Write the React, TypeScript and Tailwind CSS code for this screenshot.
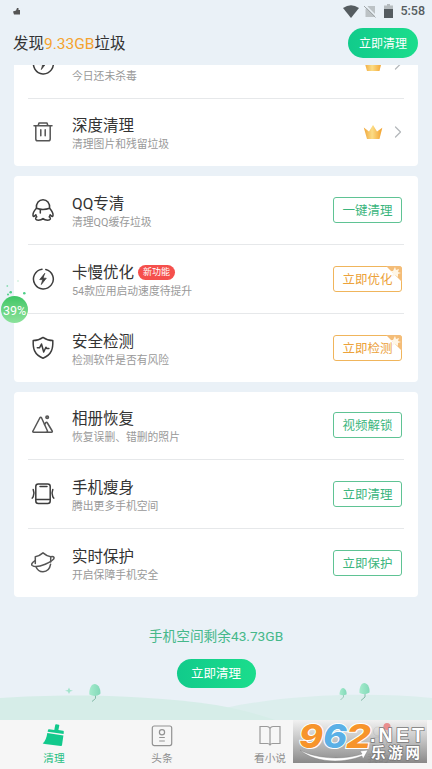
import React from 'react';
import { ChevronRight } from 'lucide-react';

type RowProps = {
  icon: React.ReactNode;
  title?: string;
  desc: string;
  badge?: string;
  action: React.ReactNode;
  className?: string;
};

const Crown = () => (
  <svg className="w-5 h-4" viewBox="0 0 20 16">
    <defs>
      <linearGradient id="crown" x1="0" x2="1" y1="0" y2="0">
        <stop offset="0" stopColor="#f0a63a" />
        <stop offset="0.45" stopColor="#fbdc85" />
        <stop offset="1" stopColor="#f2a02c" />
      </linearGradient>
    </defs>
    <path d="M.8 3.5 6 7.5 10 1l4 6.5 5.300-3.800L16.500 15H4z" fill="url(#crown)" />
  </svg>
);

const VipAction = () => (
  <div className="flex items-center gap-[5px] -mr-[6px]">
    <Crown />
    <ChevronRight className="w-5 h-5 text-[#b4b8bb]" strokeWidth={1.5} />
  </div>
);

const GreenButton = ({ label }: { label: string }) => (
  <button className="w-[69px] h-[26px] rounded-[3px] border border-[#5fc394] text-[#3bb57d] text-[12.5px] leading-[25px]">
    {label}
  </button>
);

const OrangeButton = ({ label }: { label: string }) => (
  <button className="relative w-[69px] h-[26px] rounded-[3px] border border-[#f0b55c] text-[#eca23a] text-[12.5px] leading-[25px]">
    <svg className="absolute -top-px -right-px w-4 h-4" viewBox="0 0 16 16">
      <path d="M0 0h13q3 0 3 3v13z" fill="#f4bd78" />
      <path d="m9 1 1 3 3-1-1 3 3 1-3 1 0 3-3-2-3 2 1-4-3-2 3 0z" fill="#fff6e6" />
    </svg>
    <span className="relative">{label}</span>
  </button>
);

const LineIcon = ({ children }: { children: React.ReactNode }) => (
  <svg
    className="w-6 h-6 shrink-0"
    viewBox="0 0 24 24"
    fill="none"
    stroke="#3d3d3d"
    strokeWidth="1.5"
    strokeLinecap="round"
    strokeLinejoin="round"
  >
    {children}
  </svg>
);

const BoltIcon = () => (
  <LineIcon>
    <path d="M14.800 2.400a9.900 9.900 0 1 1-3.800-.2" />
    <path d="M13.600 6.500 8.700 12.600h3l-1.400 5 5-6.400h-3z" fill="#3d3d3d" strokeWidth=".7" />
  </LineIcon>
);

const TrashIcon = () => (
  <LineIcon>
    <path d="M3 5.700h18M7.200 5.500 8 3h8l.8 2.500M4.800 6v13q0 1.800 1.800 1.800h10.800q1.800 0 1.800-1.800V6M9.800 9.700v6M14.200 9.700v6" stroke="#555" />
  </LineIcon>
);

const PenguinIcon = () => (
  <LineIcon>
    <path d="M5.400 10.300C5 5 8 1.700 12 1.700s7 3.300 6.600 8.600c2 2.200 3.700 5 3.400 7.300-.2 1.500-1.800.7-2.900-.8-.2.900-.5 1.500-.9 2.100 2.200 1.300 1.400 3.300-1.500 3.300-2 0-3.500-.4-4.700-1.600-1.200 1.200-2.700 1.600-4.700 1.600-2.900 0-3.700-2-1.500-3.300-.4-.6-.7-1.200-.9-2.100-1.100 1.500-2.700 2.300-2.900.8-.3-2.300 1.400-5.100 3.500-7.300z" />
    <path d="M5.400 10.300c4 1.400 9.200 1.400 13.200 0M9.300 11.500v3.500" />
  </LineIcon>
);

const ShieldIcon = () => (
  <LineIcon>
    <path d="M12 1.400C8.800 3.700 5.500 4.600 2.200 4.600c-.3 7.600.8 14 9.800 17.600 9-3.600 10.100-10 9.800-17.600-3.300 0-6.600-.9-9.800-3.200z" />
    <path d="M6.300 11.800h2.200l2-3.800 2.200 8 2.200-4.800 1 1.200h2" />
  </LineIcon>
);

const MountainIcon = () => (
  <LineIcon>
    <g stroke="#555">
      <path d="M15.800 19.300H2.800q-1.600 0-.8-1.300L8.800 5q.9-1.500 1.800 0l6 13.200" />
      <path d="m13.500 11.500 1.200-1.700q.9-1 1.700.2L21.200 18q.6 1.300-.8 1.300h-5" />
      <circle cx="16.200" cy="4.200" r="1.300" fill="#999" />
    </g>
  </LineIcon>
);

const PhoneIcon = () => (
  <LineIcon>
    <rect x="4.800" y="2" width="14.400" height="19.600" rx="2.500" />
    <path d="M9 4.600h7M5 17.500h14M2.200 7.500q1.600 3.800 0 7.200l-1 1.400M21.800 7.500q-1.600 3.800 0 7.200l1 1.400" />
  </LineIcon>
);

const PlanetIcon = () => (
  <LineIcon>
    <g stroke="#555">
      <path d="M4.300 12.500V5.800Q8.500 5 12 1.900q3.500 3.100 7.700 3.900V11M5 15.700c1.300 3.500 4 5 7 5 3.900 0 6.800-2.600 7.600-7.500" />
      <path d="M4.200 9.700C1 11.500 0 13.500 1.200 14.500c2.200 1.600 8 .8 13-1.300 5.500-2.300 9.800-5.200 8.700-6.900-.5-.7-1.700-.8-3-.5" />
    </g>
  </LineIcon>
);

const Row = ({ icon, title, desc, badge, action, className = 'h-[69px] pt-[17px]' }: RowProps) => (
  <div className={`flex items-start border-b border-[#e6e8ea] last:border-0 ${className}`}>
    <div className="mt-[5px] ml-[3px] mr-[17px] flex">{icon}</div>
    <div className="flex-1">
      <div className="flex items-center h-[22px] text-[15.5px] leading-5 text-[#333]">
        {title}
        {badge && (
          <span className="ml-1 -mt-px px-[5px] h-[15px] rounded-full bg-[#f5504c] text-white text-[9px] leading-[15px]">{badge}</span>
        )}
      </div>
      <div className="h-[14px] mt-px text-[10.8px] leading-[14px] text-[#999]">{desc}</div>
    </div>
    <div className="flex items-center h-[26px] mt-1 mr-[2px]">{action}</div>
  </div>
);

const Card = ({ children, className = '' }: { children: React.ReactNode; className?: string }) => (
  <section className={`mx-[14px] px-[14px] rounded-[4px] bg-white shrink-0 ${className}`}>{children}</section>
);

const StatusBar = () => (
  <div className="flex items-center justify-between h-[22px] pl-[13px] pr-[7px] text-[#555c60]">
    <svg className="w-[8px] h-[7px]" viewBox="0 0 8 7">
      <path d="M4 0h1.500v2H7v4.500H1L0 3.500 3 2.500z" fill="#555" />
    </svg>
    <div className="flex items-center">
      <svg className="w-4 h-[13px]" viewBox="0 0 16 13">
        <path d="M0 3Q8-2.500 16 3L8 13z" fill="currentColor" />
      </svg>
      <svg className="w-3 h-[13px] ml-[5px]" viewBox="0 0 12 13">
        <path d="M4 1h7v11H1.500V4z" fill="#bcc2c5" />
        <path d="m1 0 12 12" stroke="#eaf1f7" strokeWidth="1.500" />
        <path d="m0 1 11.500 11.500" stroke="#9fa5a8" strokeWidth="1" />
      </svg>
      <svg className="w-[9px] h-[14px] ml-[8px]" viewBox="0 0 9 14">
        <path d="M3 0h3v1.500h3V6H0V1.500h3z" fill="#b5bbbe" />
        <path d="M0 5h9v9H0z" fill="currentColor" />
      </svg>
      <span className="ml-[7px] text-[12.5px] font-medium leading-[22px]">5:58</span>
    </div>
  </div>
);

const Header = () => (
  <div className="flex items-center justify-between h-[43px] pl-[13px] pr-[14px]">
    <h1 className="pt-[2px] text-[15.5px] text-[#333]">
      发现<span className="text-[#f5a32f]">9.33GB</span>垃圾
    </h1>
    <button className="w-[70px] h-[30px] -mt-px pt-px rounded-full bg-linear-to-r from-[#11cb8b] to-[#1bdd8c] text-white text-[12px]">
      立即清理
    </button>
  </div>
);

const Scenery = () => (
  <svg className="w-full h-[42px] -mt-[10px] shrink-0" viewBox="0 0 432 42" preserveAspectRatio="none">
    <defs>
      <linearGradient id="tree" x1="0" x2="1" y1="0" y2="0">
        <stop offset="0" stopColor="#a5ebcd" />
        <stop offset="1" stopColor="#82d9b8" />
      </linearGradient>
    </defs>
    <path d="M225 30C290 16 370 14 432 20v22H225z" fill="#dceeed" />
    <path d="M0 20C60 16 140 16 216 27Q250 33 275 42H0z" fill="#d6ede8" />
    <path d="M69 9.500 70.200 12l2.800.700-2.800.800L69 16l-1.200-2.500-2.800-.8 2.800-.7z" fill="#a3e4cc" />
    <path d="M95.500 15v5.500l-3.500 3" stroke="#82b9a6" fill="none" />
    <path d="M95 6c4 .5 6 6 5.300 10q-5 3.500-11 .5C89 11 91 6 95 6z" fill="url(#tree)" />
    <path d="M343.500 15v4l-3 3" stroke="#9bcbbb" fill="none" />
    <path d="M343 10c2.500 0 4 4 3.500 6.500q-3.500 1.500-7 0C339.500 13 341 10 343 10z" fill="url(#tree)" />
    <path d="M365 14v5l-4 3.500" stroke="#82b9a6" fill="none" />
    <path d="M364.500 5c4 .5 5.500 6 5 9.500q-5 3-10 .5C359 10 361 5 364.500 5z" fill="url(#tree)" />
  </svg>
);

const NavItem = ({ icon, label, active }: { icon: React.ReactNode; label: string; active?: boolean }) => (
  <div className={`flex-1 flex flex-col items-center pt-1 ${active ? 'text-[#1fbf84]' : 'text-[#8f8f8f]'}`}>
    {icon}
    <span className="mt-[3px] text-[10.7px] leading-[15px]">{label}</span>
  </div>
);

const SiteMark = () => (
  <svg className="absolute left-[293px] top-0 w-[134px] h-[43px]" viewBox="0 0 134 43">
    <defs>
      <linearGradient id="plate" x1="0" x2="0" y1="0" y2="1">
        <stop offset="0" stopColor="#f0f0f0" stopOpacity="0.85" />
        <stop offset="0.5" stopColor="#b8b8b8" stopOpacity="0.87" />
        <stop offset="1" stopColor="#7d7d7d" stopOpacity="0.9" />
      </linearGradient>
    </defs>
    <path d="M0 0h134v43H0z" fill="url(#plate)" />
    <circle cx="94" cy="6.500" r="3.500" fill="#e98d8d" />
    <path d="M7 30c14 8 41 11 62 4l-2-3 8-1-5 9-1-3C46 45 19 41 7 30z" fill="#fff" stroke="#777" strokeWidth=".4" />
    <g
      fontFamily="Inter, 'Liberation Sans', sans-serif"
      fontWeight="800"
      fontStyle="italic"
      fontSize="33"
      stroke="#fff"
      strokeWidth="2"
      paintOrder="stroke"
    >
      <text x="6" y="27.500" fill="#f7942b" textLength="24" lengthAdjust="spacingAndGlyphs">9</text>
      <text x="30" y="27.500" fill="#5bb0e6" textLength="24" lengthAdjust="spacingAndGlyphs">6</text>
      <text x="53" y="27.500" fill="#f7942b" textLength="25" lengthAdjust="spacingAndGlyphs">2</text>
    </g>
    <g fill="#fff" stroke="#777" strokeWidth="1.500" paintOrder="stroke" fontWeight="700">
      <text x="77" y="21.500" fontFamily="'Liberation Sans', sans-serif" fontSize="19.500" textLength="54">.NET</text>
      <text x="78" y="38" fontFamily="'Noto Sans CJK SC', sans-serif" fontSize="14.500" textLength="49">乐游网</text>
    </g>
  </svg>
);

const BottomNav = () => (
  <nav className="relative flex h-[49px] shrink-0 bg-[#f6f6f6]">
    <NavItem
      active
      label="清理"
      icon={
        <svg className="w-6 h-6" viewBox="0 0 24 24" fill="#12c98c">
          <path d="m14.300.3 2.500.4q.6.200.5.800l-.9 4.500 4.600.700q.9.200.8 1l-.2 2.200L5.600 7.800 6 6q.2-.8 1-.7l5.300.6.900-4.800q.2-1 1.100-.8z" />
          <path d="m5.300 9 16.100 2.400-1.400 9.800q-.2.900-1.100.8l-16-2.100-2.200-.4C3.400 17 4.600 13.500 5.300 9z" />
        </svg>
      }
    />
    <NavItem
      label="头条"
      icon={
        <svg className="w-6 h-6" viewBox="0 0 24 24" fill="none" stroke="#929292" strokeWidth="1.2">
          <rect x="2.300" y="2" width="19.400" height="19.600" rx="2" />
          <circle cx="12" cy="8.300" r="2.600" />
          <path d="M9.200 13.500h5.600M9.200 17h5.600" />
        </svg>
      }
    />
    <NavItem
      label="看小说"
      icon={
        <svg className="w-6 h-6" viewBox="0 0 24 24" fill="none" stroke="#9a9a9a" strokeWidth="1.2">
          <path d="M12 4.500Q11 2.500 9 2.500H2v17h7.500q1.500 0 2.500 1.500 1-1.500 2.500-1.500H22v-17h-7q-2 0-3 2zM12 4.500V21" />
        </svg>
      }
    />
    <NavItem
      label="我的"
      icon={
        <svg className="w-6 h-6" viewBox="0 0 24 24" fill="none" stroke="#929292" strokeWidth="1.2">
          <circle cx="12" cy="7.500" r="4.500" />
          <path d="M3 21q1-8 9-8t9 8z" />
          <circle cx="21" cy="4" r="4" fill="#f06a6a" stroke="none" />
        </svg>
      }
    />
    <SiteMark />
  </nav>
);

// 悬浮的内存占用球
const MemoryBall = () => (
  <div className="absolute left-0 top-[280px] w-7 h-[44px]">
    <svg className="absolute left-0 top-0 w-7 h-4" viewBox="0 0 28 16" fill="#4fcf88">
      <circle cx="7.300" cy="6" r=".9" opacity=".6" />
      <circle cx="18" cy="1" r=".8" opacity=".4" />
      <circle cx="10.700" cy="12.300" r="1.300" />
      <circle cx="8" cy="14.500" r="1" />
      <circle cx="24.300" cy="13.300" r="1.300" />
    </svg>
    <div className="absolute left-[1px] top-4 flex items-center justify-center w-[27px] h-[27px] pt-[3px] rounded-full bg-linear-to-b from-[#3cc666] to-[#8be29b] text-white text-[12.5px]">
      39%
    </div>
  </div>
);

const App: React.FC = () => {
  return (
    <div className="relative flex flex-col w-[432px] h-[769px] overflow-hidden bg-[#eaf1f7] font-[Roboto,'Noto_Sans_CJK_SC',sans-serif]">
      <StatusBar />
      <Header />

      <main className="flex-1 min-h-0 flex flex-col overflow-hidden">
        <Card className="-mt-[36px] rounded-t-none">
          <Row className="h-[70px] pt-[18px]" icon={<BoltIcon />} desc="今日还未杀毒" action={<VipAction />} />
          <Row className="h-[67px] pt-[16px]" icon={<TrashIcon />} title="深度清理" desc="清理图片和残留垃圾" action={<VipAction />} />
        </Card>

        <Card className="mt-[10px]">
          <Row icon={<PenguinIcon />} title="QQ专清" desc="清理QQ缓存垃圾" action={<GreenButton label="一键清理" />} />
          <Row icon={<BoltIcon />} title="卡慢优化" badge="新功能" desc="54款应用启动速度待提升" action={<OrangeButton label="立即优化" />} />
          <Row className="h-[68px] pt-[17px]" icon={<ShieldIcon />} title="安全检测" desc="检测软件是否有风险" action={<OrangeButton label="立即检测" />} />
        </Card>

        <Card className="mt-[10px]">
          <Row className="h-[68px] pt-[16px]" icon={<MountainIcon />} title="相册恢复" desc="恢复误删、错删的照片" action={<GreenButton label="视频解锁" />} />
          <Row className="h-[69px] pt-[17px]" icon={<PhoneIcon />} title="手机瘦身" desc="腾出更多手机空间" action={<GreenButton label="立即清理" />} />
          <Row className="h-[68px] pt-[17px]" icon={<PlanetIcon />} title="实时保护" desc="开启保障手机安全" action={<GreenButton label="立即保护" />} />
        </Card>

        <div className="flex flex-col items-center pt-[29px]">
          <p className="text-[13.7px] leading-5 text-[#45b88a]">手机空间剩余43.73GB</p>
          <button className="mt-[13px] w-[79px] h-[29px] pt-px rounded-full bg-linear-to-r from-[#11cb8b] to-[#1bdd8c] text-white text-[12.5px]">
            立即清理
          </button>
        </div>
        <Scenery />
      </main>

      <BottomNav />
      <MemoryBall />
    </div>
  );
};

export default App;
